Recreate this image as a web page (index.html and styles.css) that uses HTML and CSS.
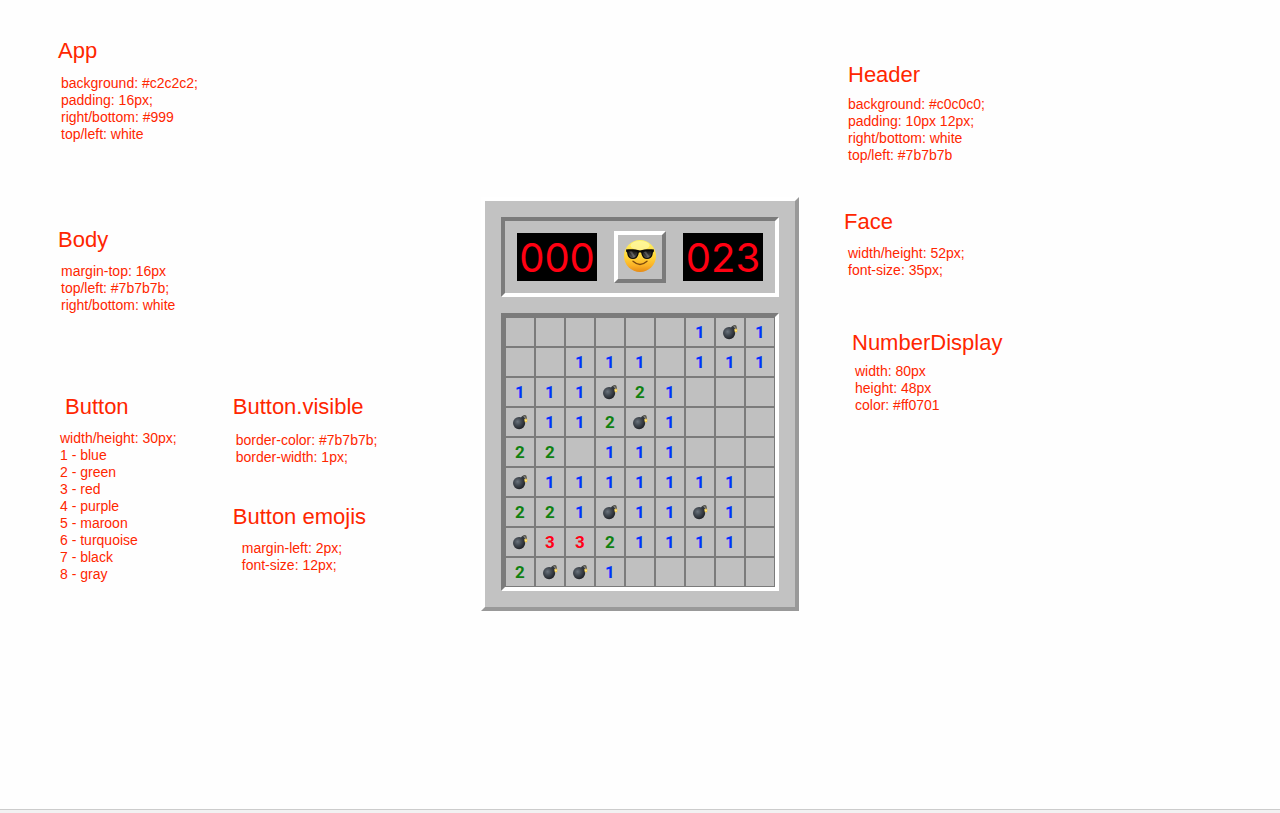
FILE: index.html
```html
<!DOCTYPE html>
<html lang="en">
<head>
<meta charset="utf-8">
<meta name="viewport" content="width=device-width, initial-scale=1">
<title>Minesweeper</title>
<link rel="stylesheet" href="styles.css">
</head>
<body>
<svg class="defs" aria-hidden="true">
  <defs>
    <radialGradient id="bombFill" cx="0.38" cy="0.38" r="0.65">
      <stop offset="0" stop-color="#6a737c"/>
      <stop offset="0.45" stop-color="#434a52"/>
      <stop offset="1" stop-color="#1f2227"/>
    </radialGradient>
    <symbol id="bomb" viewBox="0 0 16 16">
      <path d="M8.8 4 10.2 1.8 13.2 4 12 6.6Z" fill="#33383d"/>
      <path d="M11.2 2.6C12 1.2 13.8 1.6 14 3 14.1 4 14 4.6 14 5.6" fill="none" stroke="#56554d" stroke-width="1.5"/>
      <circle cx="7.1" cy="9.1" r="6.1" fill="url(#bombFill)"/>
      <path d="M13.9 3.9 14.6 5.2 15.7 5.8 15 6.8 15.1 8.4 13.8 8 12.6 8.2 12.8 6.7 12.2 5.6 13.2 5.2Z" fill="#e8b93c"/>
      <circle cx="13.9" cy="6.5" r="1.1" fill="#ffec83"/>
    </symbol>
  </defs>
</svg>

<main class="stage">
  <section class="notes notes-left" aria-label="App notes">
    <article class="note note-app">
      <h2>App</h2>
      <p>background: #c2c2c2;<br>padding: 16px;<br>right/bottom: #999<br>top/left: white</p>
    </article>
    <article class="note note-body">
      <h2>Body</h2>
      <p>margin-top: 16px<br>top/left: #7b7b7b;<br>right/bottom: white</p>
    </article>
    <div class="button-notes">
      <article class="note note-button">
        <h2>Button</h2>
        <p>width/height: 30px;<br>1 - blue<br>2 - green<br>3 - red<br>4 - purple<br>5 - maroon<br>6 - turquoise<br>7 - black<br>8 - gray</p>
      </article>
      <div class="button-variants">
        <article class="note note-visible">
          <h2>Button.visible</h2>
          <p>border-color: #7b7b7b;<br>border-width: 1px;</p>
        </article>
        <article class="note note-emojis">
          <h2>Button emojis</h2>
          <p>margin-left: 2px;<br>font-size: 12px;</p>
        </article>
      </div>
    </div>
  </section>

  <section class="app" aria-label="Minesweeper">
    <header class="header">
      <div class="number-display">000</div>
      <button class="face" type="button" aria-label="New game">
        <svg viewBox="0 0 34 34" aria-hidden="true">
          <defs>
            <linearGradient id="faceFill" x1="0" y1="0" x2="0" y2="1">
              <stop offset="0" stop-color="#fff36a"/>
              <stop offset="0.5" stop-color="#ffd83c"/>
              <stop offset="0.8" stop-color="#fbb226"/>
              <stop offset="1" stop-color="#e58a15"/>
            </linearGradient>
            <linearGradient id="lensFill" x1="0" y1="0" x2="0" y2="1">
              <stop offset="0" stop-color="#111"/>
              <stop offset="1" stop-color="#555"/>
            </linearGradient>
          </defs>
          <circle cx="17" cy="17" r="16" fill="url(#faceFill)"/>
          <ellipse cx="17" cy="6.5" rx="9.5" ry="4.5" fill="#fffbb0" opacity="0.65"/>
          <path d="M10 22.3Q17 28.6 24 22.3" fill="none" stroke="#7d4a0c" stroke-width="1.3" stroke-linecap="round"/>
          <path d="M3 10.6C8 10 13 10.4 17 11.6 21 10.4 26 10 31 10.6L30.8 12.8 29.9 13.6C29.6 18 27.5 20 24 20 20.5 20 18.8 17.5 18.2 13.8Q17 12.9 15.8 13.8C15.2 17.5 13.5 20 10 20 6.5 20 4.4 18 4.1 13.6L3.2 12.8Z" fill="#090909"/>
          <path d="M5.3 12.2C9 11.6 12 12 14.5 13.2 14.1 16.8 12.4 18.9 9.9 18.9 7 18.9 5.5 16.9 5.3 12.2ZM28.7 12.2C25 11.6 22 12 19.5 13.2 19.9 16.8 21.6 18.9 24.1 18.9 27 18.9 28.5 16.9 28.7 12.2Z" fill="url(#lensFill)"/>
          <path d="M6.5 12.6 9 12.4 12.2 17.6 10.6 18.4ZM20.8 13 23 12.4 26.4 17.5 24.8 18.3Z" fill="#aaa" opacity="0.35"/>
        </svg>
      </button>
      <div class="number-display">023</div>
    </header>
    <div class="body" id="board"></div>
  </section>

  <section class="notes notes-right" aria-label="Header notes">
    <article class="note note-header">
      <h2>Header</h2>
      <p>background: #c0c0c0;<br>padding: 10px 12px;<br>right/bottom: white<br>top/left: #7b7b7b</p>
    </article>
    <article class="note note-face">
      <h2>Face</h2>
      <p>width/height: 52px;<br>font-size: 35px;</p>
    </article>
    <article class="note note-number">
      <h2>NumberDisplay</h2>
      <p>width: 80px<br>height: 48px<br>color: #ff0701</p>
    </article>
  </section>
</main>
<script src="board.js"></script>
</body>
</html>
```

FILE: board.js
```js
// "*" is a bomb, "." an empty cell, a digit the number of neighbouring bombs.
const rows = [
  "......1*1",
  "..111.111",
  "111*21...",
  "*112*1...",
  "22.111...",
  "*1111111.",
  "221*11*1.",
  "*3321111.",
  "2**1.....",
];

const board = document.getElementById("board");
for (const row of rows) {
  for (const value of row) {
    const cell = document.createElement("button");
    cell.type = "button";
    cell.className = "cell";
    if (value === "*") {
      cell.setAttribute("aria-label", "bomb");
      cell.innerHTML = '<svg class="bomb"><use href="#bomb"/></svg>';
    } else if (value === ".") {
      cell.setAttribute("aria-label", "empty");
    } else {
      cell.classList.add("value-" + value);
      cell.textContent = value;
    }
    board.append(cell);
  }
}
```

FILE: styles.css
```css
* {
  box-sizing: border-box;
}

body {
  margin: 0;
  min-height: 100vh;
  background: #f2f2f2;
  font-family: "Liberation Sans", Arial, sans-serif;
}

.defs {
  position: absolute;
  width: 0;
  height: 0;
}

.stage {
  display: grid;
  grid-template-columns: minmax(0, 1fr) auto minmax(0, 1fr);
  min-height: calc(100vh - 3px);
  padding-bottom: 1px;
  border-bottom: 1px solid #ccc;
  background: #fefefe;
}

/* Notes */

.notes {
  color: #ff2600;
}

.notes-left {
  padding: 38px 0 0 58px;
}

.notes-right {
  padding: 62px 0 0 45px;
}

.note h2 {
  margin: 0 0 10px;
  font-size: 22px;
  font-weight: 400;
  line-height: 26px;
}

.note p {
  margin: 0;
  padding-left: 3px;
  font-size: 14px;
  line-height: 17px;
}

.note-app {
  margin-bottom: 84px;
}

.note-app h2 {
  margin-bottom: 11px;
}

.note-body {
  margin-bottom: 80px;
}

.button-notes {
  display: flex;
  gap: 56px;
}

.note-button h2 {
  padding-left: 7px;
}

.note-button p {
  padding-left: 2px;
}

.button-variants {
  display: flex;
  flex-direction: column;
  gap: 38px;
}

.note-visible h2 {
  margin-bottom: 12px;
}

.note-emojis p {
  padding-left: 9px;
}

.note-header {
  margin-bottom: 45px;
}

.note-header h2 {
  margin-bottom: 8px;
  padding-left: 4px;
}

.note-face {
  margin-bottom: 51px;
}

.note-header p,
.note-face p {
  padding-left: 4px;
}

.note-number {
  padding-left: 8px;
}

.note-number h2 {
  margin-bottom: 7px;
}

/* Game */

.app {
  align-self: center;
  padding: 16px;
  border: 4px solid;
  border-color: #fff #999 #999 #fff;
  background: #c2c2c2;
}

.header {
  display: flex;
  align-items: center;
  justify-content: space-between;
  padding: 10px 12px;
  border: 4px solid;
  border-color: #7b7b7b #fff #fff #7b7b7b;
  background: #c0c0c0;
}

.number-display {
  width: 80px;
  height: 48px;
  background: #000;
  color: #ff0012;
  font-family: Inter, sans-serif;
  font-size: 40px;
  line-height: 50px;
  text-align: center;
}

.face {
  display: flex;
  align-items: center;
  justify-content: center;
  width: 52px;
  height: 52px;
  padding: 0 0 2px;
  border: 4px solid;
  border-color: #fff #7b7b7b #7b7b7b #fff;
  background: #c0c0c0;
}

.face svg {
  width: 34px;
  height: 34px;
}

.body {
  display: grid;
  grid-template-columns: repeat(9, 30px);
  grid-auto-rows: 30px;
  margin-top: 16px;
  border: 4px solid;
  border-color: #7b7b7b #fff #fff #7b7b7b;
}

.cell {
  display: flex;
  align-items: center;
  justify-content: center;
  padding: 0;
  border: 1px solid #7b7b7b;
  background: #c0c0c0;
  font-family: Roboto, sans-serif;
  font-size: 17px;
  font-weight: 700;
}

.bomb {
  width: 16px;
  height: 16px;
}

.value-1 {
  color: #0030ff;
}

.value-2 {
  color: #108010;
}

.value-3 {
  color: #ff0018;
}
```
